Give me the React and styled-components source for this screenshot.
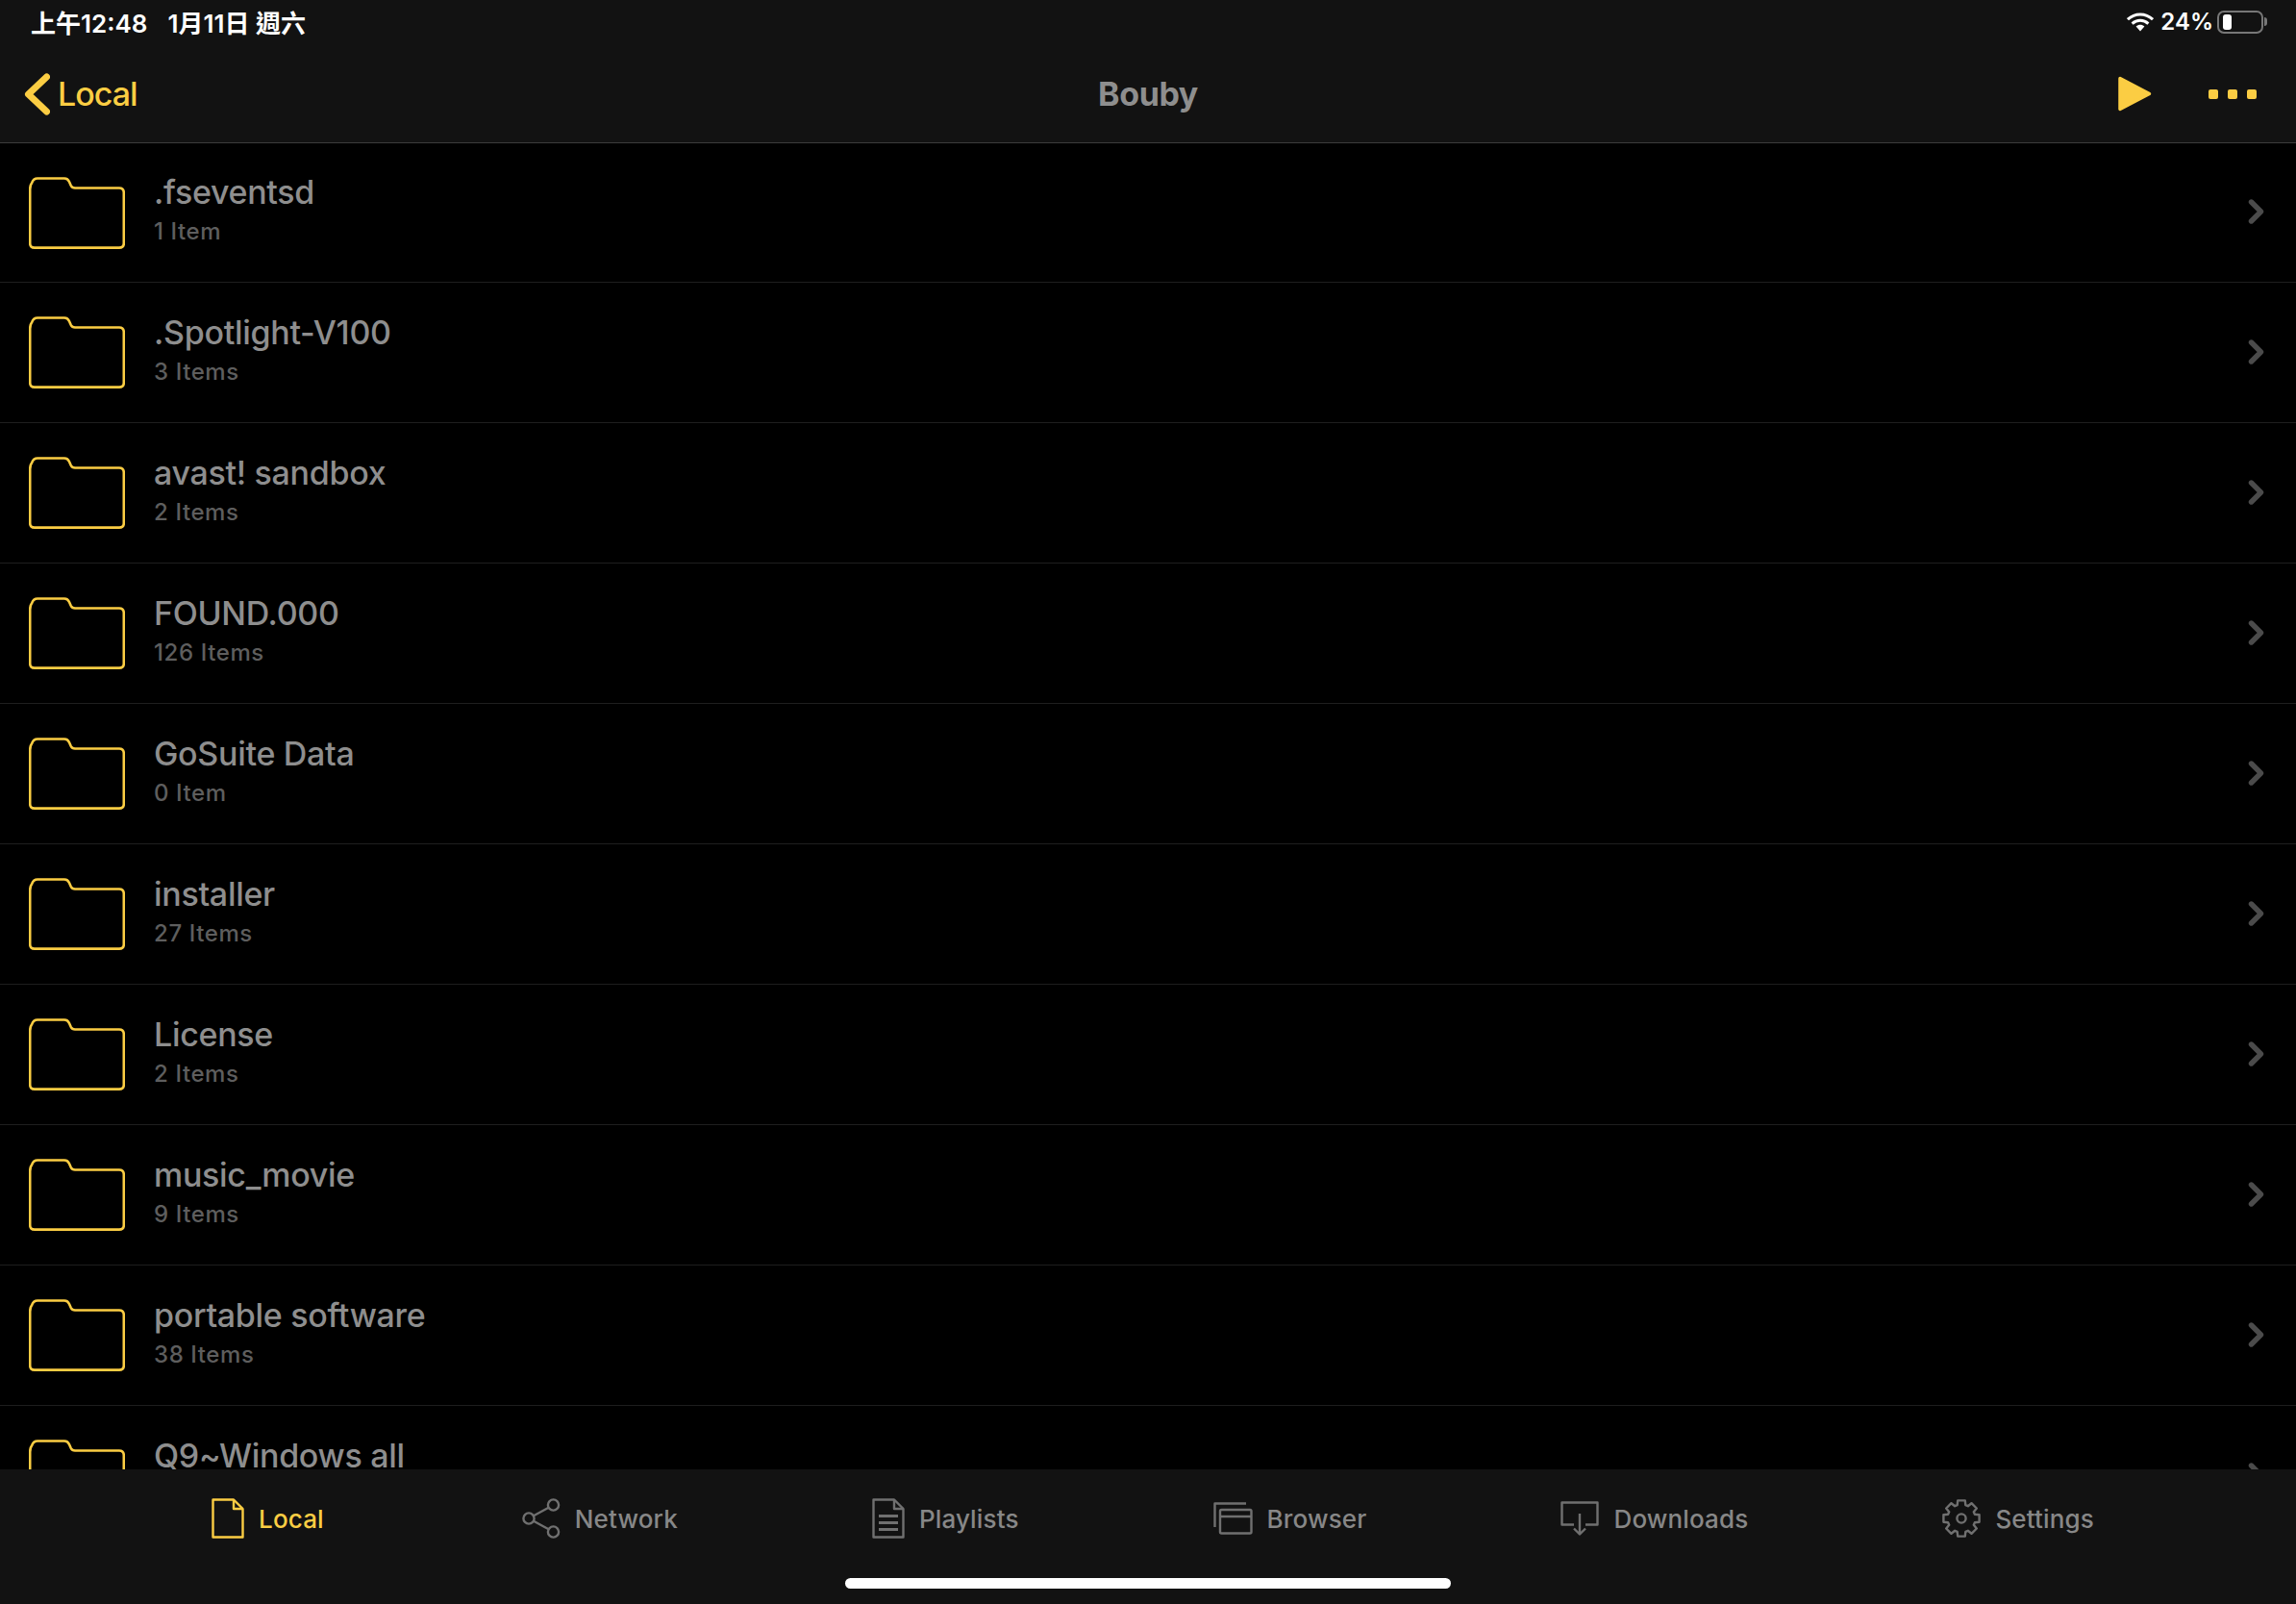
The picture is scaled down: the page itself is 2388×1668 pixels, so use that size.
import React from 'react';
import styled, { createGlobalStyle } from 'styled-components';

const YELLOW = '#fbcd43';
const ICON_GREY = '#707070';

const GlobalStyle = createGlobalStyle`
  html, body {
    margin: 0;
    padding: 0;
    background: #000;
  }
  body {
    font-family: Inter, "Noto Sans CJK TC", sans-serif;
  }
`;

const Screen = styled.div`
  width: 2388px;
  height: 1668px;
  display: flex;
  flex-direction: column;
  background: #000;
  overflow: hidden;
`;

const Header = styled.header`
  flex: none;
  height: 149px;
  box-sizing: border-box;
  background: #121212;
  border-bottom: 1px solid #3c3c3c;
`;

const StatusBar = styled.div`
  height: 47px;
  box-sizing: border-box;
  padding: 0 34px 2px 32px;
  display: flex;
  align-items: center;
  justify-content: space-between;
  color: #fff;
  font-size: 26px;
  font-weight: 600;
`;

const StatusGroup = styled.div`
  display: flex;
  align-items: center;
  gap: ${(p) => p.$gap || 0}px;
`;

const Percent = styled.span`
  font-size: 24px;
  margin-right: -3px;
`;

const Battery = styled.div`
  width: 48px;
  height: 24px;
  box-sizing: border-box;
  padding: 2px 4px;
  border: 2px solid #777;
  border-radius: 7px;
  position: relative;

  &::before {
    content: '';
    display: block;
    width: 9px;
    height: 16px;
    background: #fff;
    border-radius: 3px;
  }

  &::after {
    content: '';
    position: absolute;
    top: 5px;
    right: -6px;
    width: 3px;
    height: 9px;
    background: #777;
    border-radius: 0 3px 3px 0;
  }
`;

const NavBar = styled.div`
  height: 101px;
  padding: 0 25px;
  display: grid;
  grid-template-columns: 1fr auto 1fr;
  align-items: center;
`;

const BackLink = styled.div`
  display: flex;
  align-items: center;
  gap: 8px;
  color: ${YELLOW};
  font-size: 34px;
  font-weight: 500;
  letter-spacing: -1px;
`;

const NavTitle = styled.div`
  color: #8e8e8e;
  font-size: 34px;
  font-weight: 700;
  letter-spacing: -0.4px;
`;

const NavActions = styled.div`
  display: flex;
  justify-content: flex-end;
  align-items: center;
  gap: 59px;
  padding-right: 16px;
`;

const Dots = styled.div`
  display: flex;
  gap: 10px;
`;

const Dot = styled.span`
  width: 10px;
  height: 10px;
  border-radius: 2px;
  background: ${YELLOW};
`;

const List = styled.main`
  flex: 1;
  min-height: 0;
  overflow: hidden;
`;

const Row = styled.div`
  height: 145px;
  box-sizing: content-box;
  padding: 0 32px 0 30px;
  display: flex;
  align-items: center;
  border-bottom: 1px solid #1e1e1e;

  &:first-child {
    height: 144px;
  }
`;

const RowText = styled.div`
  flex: 1;
  margin: -9px 0 0 30px;
  display: flex;
  flex-direction: column;
  gap: 3px;
`;

const RowTitle = styled.div`
  color: #8e8e8e;
  font-size: 34px;
  font-weight: 500;
  line-height: 46px;
  letter-spacing: -0.3px;
`;

const RowSub = styled.div`
  height: 30px;
  color: #5e5e5e;
  font-size: 24px;
  font-weight: 500;
  line-height: 30px;
  letter-spacing: 0.6px;
`;

const TabBar = styled.nav`
  flex: none;
  height: 140px;
  box-sizing: border-box;
  padding-top: 29px;
  background: #121212;
  display: flex;
  flex-direction: column;
  align-items: center;
`;

const Tabs = styled.div`
  height: 44px;
  padding-left: 10px;
  display: flex;
  justify-content: center;
  align-items: center;
  gap: 202px;
`;

const Tab = styled.div`
  display: flex;
  align-items: center;
  gap: 15px;
  margin-right: ${(p) => (p.$active ? 4 : 0)}px;
  color: ${(p) => (p.$active ? YELLOW : '#878787')};
  font-size: 26px;
  font-weight: 500;
  letter-spacing: 0.15px;
`;

const HomeIndicator = styled.div`
  margin-top: 40px;
  width: 630px;
  height: 11px;
  border-radius: 6px;
  background: #fff;
`;

const Wifi = () => (
  <svg width="28" height="20" viewBox="0 0 28 20">
    <path d="M1 7.2C8.4.2 19.6.2 27 7.2" fill="none" stroke="#fff" strokeWidth="3" />
    <path d="M5.6 11.6c4.8-4.4 12-4.4 16.8 0" fill="none" stroke="#fff" strokeWidth="3" />
    <path d="M9.6 14.4c2.6-2.2 6.2-2.2 8.8 0L14 19.4z" fill="#fff" />
  </svg>
);

const BackChevron = () => (
  <svg width="27" height="44" viewBox="0 0 27 44">
    <path d="M23.5 4 4.5 22l19 18" fill="none" stroke={YELLOW} strokeWidth="7" strokeLinecap="round" strokeLinejoin="round" />
  </svg>
);

const PlayIcon = () => (
  <svg width="35" height="39" viewBox="0 0 35 39">
    <path d="M2 3.5 32.5 19.5 2 35.5Z" fill={YELLOW} stroke={YELLOW} strokeWidth="3.5" strokeLinejoin="round" />
  </svg>
);

const FolderIcon = () => (
  <svg width="100" height="75" viewBox="0 0 100 75" style={{ flex: 'none' }}>
    <path
      d="M6 73.6Q1.2 73.6 1.2 69V13Q1.2 8.5 3.2 6Q4.8 1.5 9 1.5H37Q40.5 1.5 42 5L43.8 9Q45 11.5 48 11.5H94Q98.8 11.5 98.8 16.5V69Q98.8 73.6 94 73.6Z"
      fill="none"
      stroke={YELLOW}
      strokeWidth="2.6"
      strokeLinejoin="round"
    />
  </svg>
);

const RowChevron = () => (
  <svg width="18" height="26" viewBox="0 0 18 26" style={{ flex: 'none', marginTop: -2 }}>
    <path d="M3.5 3 13.5 13 3.5 23" fill="none" stroke="#4b4b4b" strokeWidth="5.4" strokeLinecap="round" strokeLinejoin="round" />
  </svg>
);

const line = { fill: 'none', stroke: ICON_GREY, strokeWidth: 2.4, strokeLinejoin: 'round' };

const FileIcon = () => (
  <svg width="34" height="42" viewBox="0 0 34 42">
    <g {...line} stroke={YELLOW}>
      <path d="M1.5 1.5H23L32.5 11V40.5H1.5Z" />
      <path d="M23 1.5V11H32.5" />
    </g>
  </svg>
);

const ShareIcon = () => (
  <svg width="40" height="42" viewBox="0 0 40 42">
    <g {...line}>
      <circle cx="32.5" cy="7" r="5.6" />
      <circle cx="32.5" cy="35" r="5.6" />
      <circle cx="7" cy="21" r="5.6" />
      <path d="M12 18.3 27.6 9.8M12 23.7 27.6 32.2" />
    </g>
  </svg>
);

const ListFileIcon = () => (
  <svg width="34" height="42" viewBox="0 0 34 42">
    <g {...line}>
      <path d="M1.5 1.5H23L32.5 11V40.5H1.5Z" />
      <path d="M23 1.5V11H32.5" />
    </g>
    <path d="M7 18.5H27M7 25.5H27M7 32.5H27" fill="none" stroke={ICON_GREY} strokeWidth="3" />
  </svg>
);

const WindowsIcon = () => (
  <svg width="41" height="34" viewBox="0 0 41 34">
    <g {...line}>
      <path d="M1.5 26V1.5H34" />
      <rect x="7" y="8" width="32.5" height="24.5" rx="1.5" />
      <path d="M7 15H39.5" />
    </g>
  </svg>
);

const DownloadIcon = () => (
  <svg width="40" height="36" viewBox="0 0 40 36">
    <g {...line}>
      <path d="M14 24.5H1.5V1.5H38.5V24.5H26" />
      <path d="M20 13V34M14 28.5 20 34.5 26 28.5" />
    </g>
  </svg>
);

// gear outline, 8 teeth
const gearPath = () => {
  const points = [];
  for (let i = 0; i < 8; i++) {
    const a = (i * Math.PI) / 4;
    [[-0.3, 14.5], [-0.2, 19], [0.2, 19], [0.3, 14.5]].forEach(([da, r]) => {
      points.push(`${(20 + r * Math.sin(a + da)).toFixed(1)} ${(21 - r * Math.cos(a + da)).toFixed(1)}`);
    });
  }
  return `M${points.join('L')}Z`;
};

const GearIcon = () => (
  <svg width="40" height="42" viewBox="0 0 40 42">
    <g {...line}>
      <path d={gearPath()} />
      <circle cx="20" cy="21" r="4.6" />
    </g>
  </svg>
);

const folders = [
  { name: '.fseventsd', count: '1 Item' },
  { name: '.Spotlight-V100', count: '3 Items' },
  { name: 'avast! sandbox', count: '2 Items' },
  { name: 'FOUND.000', count: '126 Items' },
  { name: 'GoSuite Data', count: '0 Item' },
  { name: 'installer', count: '27 Items' },
  { name: 'License', count: '2 Items' },
  { name: 'music_movie', count: '9 Items' },
  { name: 'portable software', count: '38 Items' },
  { name: 'Q9~Windows all' },
];

const tabs = [
  { label: 'Local', Icon: FileIcon, active: true },
  { label: 'Network', Icon: ShareIcon },
  { label: 'Playlists', Icon: ListFileIcon },
  { label: 'Browser', Icon: WindowsIcon },
  { label: 'Downloads', Icon: DownloadIcon },
  { label: 'Settings', Icon: GearIcon },
];

const App = () => (
  <Screen>
    <GlobalStyle />
    <Header>
      <StatusBar>
        <StatusGroup $gap={21}>
          <span>上午12:48</span>
          <span>1月11日 週六</span>
        </StatusGroup>
        <StatusGroup $gap={7}>
          <Wifi />
          <Percent>24%</Percent>
          <Battery />
        </StatusGroup>
      </StatusBar>
      <NavBar>
        <BackLink>
          <BackChevron />
          Local
        </BackLink>
        <NavTitle>Bouby</NavTitle>
        <NavActions>
          <PlayIcon />
          <Dots>
            <Dot />
            <Dot />
            <Dot />
          </Dots>
        </NavActions>
      </NavBar>
    </Header>
    <List>
      {folders.map((f) => (
        <Row key={f.name}>
          <FolderIcon />
          <RowText>
            <RowTitle>{f.name}</RowTitle>
            <RowSub>{f.count}</RowSub>
          </RowText>
          <RowChevron />
        </Row>
      ))}
    </List>
    <TabBar>
      <Tabs>
        {tabs.map(({ label, Icon, active }) => (
          <Tab key={label} $active={active}>
            <Icon />
            <span>{label}</span>
          </Tab>
        ))}
      </Tabs>
      <HomeIndicator />
    </TabBar>
  </Screen>
);

export default App;
